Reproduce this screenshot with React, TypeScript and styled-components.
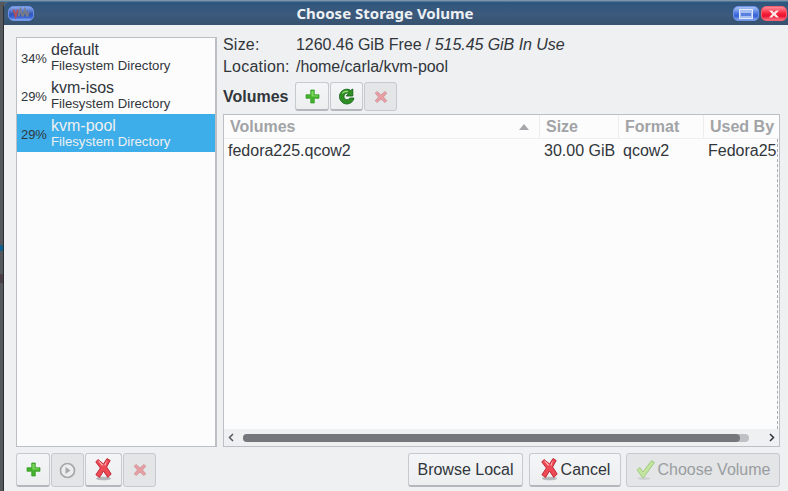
import styled, { createGlobalStyle } from "styled-components";

const Global = createGlobalStyle`
  html, body { margin: 0; padding: 0; }
  body { font-family: "Liberation Sans", Arial, sans-serif; color: #31363b; }
`;

const Screen = styled.div`
  position: relative;
  width: 788px;
  height: 491px;
  overflow: hidden;
  background: #55585d;
  padding: 2px 0 0 3px;
  box-sizing: border-box;
`;

const TopEdge = styled.div`
  position: absolute;
  top: 0;
  left: 0;
  right: 0;
  height: 2px;
  background: linear-gradient(#9b9ea3, #2f6f9c);
`;

const BackdropBit = styled.div<{ $top: number; $h: number; $c: string }>`
  position: absolute;
  left: 0;
  width: 3px;
  top: ${(p) => p.$top}px;
  height: ${(p) => p.$h}px;
  background: ${(p) => p.$c};
`;

const Win = styled.div`
  height: 489px;
  display: flex;
  flex-direction: column;
  background: #eff0f2;
  border-left: 1px solid #2b2e33;
  border-radius: 5px 0 0 0;
  overflow: hidden;
`;

const TitleBar = styled.div`
  position: relative;
  height: 23px;
  flex: none;
  display: flex;
  align-items: center;
  justify-content: space-between;
  padding: 0 1px 0 4px;
  background: linear-gradient(#2f567e, #3c5a7c 55%, #36516f);
`;

const TitleText = styled.div`
  position: absolute;
  left: 0;
  right: 22px;
  top: 2px;
  text-align: center;
  color: #eef1f4;
  font-family: "Noto Sans", "Open Sans", sans-serif;
  font-size: 15px;
  font-weight: 700;
  line-height: 19px;
`;

const Pill = styled.div<{ $c: "blue" | "red" }>`
  width: 26px;
  height: 15px;
  border-radius: 5px;
  display: flex;
  align-items: center;
  justify-content: center;
  box-sizing: border-box;
  border: 1px solid ${(p) => (p.$c === "blue" ? "#6f93e8" : "#f0606f")};
  background: ${(p) =>
    p.$c === "blue"
      ? "linear-gradient(#a9c3f5, #4a74e0 50%, #3560d4 70%, #88a8ee)"
      : "linear-gradient(#ff8a96, #f8223a 50%, #e81230 70%, #ff7080)"};
`;

const PillGroup = styled.div`
  display: flex;
  gap: 2px;
`;

const Body = styled.div`
  flex: 1;
  min-height: 0;
  display: flex;
  flex-direction: column;
  padding: 12px 8px 4px 12px;
`;

const Main = styled.div`
  height: 410px;
  display: flex;
  gap: 6px;
`;

const PoolList = styled.div`
  width: 201px;
  box-sizing: border-box;
  flex: none;
  background: #fcfcfc;
  border: 1px solid #bcc0c5;
  border-right-width: 2px;
`;

const PoolRow = styled.div<{ $sel?: boolean }>`
  height: 38px;
  display: flex;
  align-items: center;
  padding-left: 4px;
  gap: 5px;
  background: ${(p) => (p.$sel ? "#3daee9" : "transparent")};
  color: ${(p) => (p.$sel ? "#eff0f1" : "#31363b")};
`;

const Percent = styled.div`
  width: 25px;
  font-size: 13px;
  letter-spacing: -0.1px;
  color: #31363b;
  margin-top: 2px;
`;

const PoolName = styled.div`
  font-size: 16px;
  line-height: 17px;
`;

const PoolType = styled.div`
  font-size: 13.2px;
  line-height: 15px;
`;

const Detail = styled.div`
  flex: 1;
  min-width: 0;
  display: flex;
  flex-direction: column;
`;

const InfoGrid = styled.div`
  display: grid;
  grid-template-columns: 73px 1fr;
  grid-auto-rows: 22px;
  font-size: 16px;
  letter-spacing: -0.05px;
  align-items: center;
  margin-top: -3px;
`;

const InfoLabel = styled.div`
  letter-spacing: 0.2px;
`;

const VolHead = styled.div`
  display: flex;
  align-items: center;
  gap: 1px;
  margin-top: 4px;
  height: 29px;
`;

const VolLabel = styled.div`
  font-size: 16px;
  font-weight: 700;
  width: 71px;
  flex: none;
`;

const ToolBtn = styled.div<{ $w?: number; $h?: number; $off?: boolean }>`
  width: ${(p) => p.$w ?? 33}px;
  height: ${(p) => p.$h ?? 29}px;
  box-sizing: border-box;
  display: flex;
  align-items: center;
  justify-content: center;
  flex: none;
  border-radius: 3px;
  border: 1px solid #c6c9cd;
  border-bottom: ${(p) => (p.$off ? "1px" : "2px")} solid ${(p) => (p.$off ? "#c6c9cd" : "#b4b7bb")};
  background: ${(p) => (p.$off ? "#e3e5e7" : "linear-gradient(#f4f5f6, #eceef0)")};
`;

const Table = styled.div`
  margin-top: 3px;
  flex: 1;
  min-height: 0;
  display: flex;
  flex-direction: column;
  border: 1px solid #bcc0c5;
  background: #fcfcfc;
`;

const HeadRow = styled.div`
  height: 24px;
  flex: none;
  display: flex;
  border-bottom: 1px solid #eeeff0;
  box-sizing: border-box;
`;

const HeadCell = styled.div<{ $w: number }>`
  width: ${(p) => p.$w}px;
  flex: none;
  box-sizing: border-box;
  border-right: 1px solid #eceded;
  font-size: 16px;
  font-weight: 700;
  color: #a1a3a6;
  padding: 3px 0 0 6px;
  display: flex;
  justify-content: space-between;
  &:last-child { border-right: 0; flex: 1; min-width: 0; white-space: nowrap; overflow: hidden; }
`;

const SortMark = styled.span`
  width: 0;
  height: 0;
  margin: 6px 10px 0 0;
  border-left: 5px solid transparent;
  border-right: 5px solid transparent;
  border-bottom: 6px solid #a5a7aa;
`;

const Rows = styled.div`
  position: relative;
  flex: 1;
  min-height: 0;
`;

const DataRow = styled.div`
  display: flex;
  height: 24px;
  align-items: center;
  font-size: 16px;
`;

const DataCell = styled.div<{ $w: number }>`
  width: ${(p) => p.$w}px;
  flex: none;
  padding-left: 4px;
  box-sizing: border-box;
  white-space: nowrap;
  overflow: hidden;
  &:last-child { flex: 1; min-width: 0; width: auto; }
`;

const DashLine = styled.div`
  position: absolute;
  right: 1px;
  top: 0;
  bottom: 0;
  width: 0;
  border-right: 1px dashed #a9abae;
`;

const ScrollBar = styled.div`
  height: 17px;
  flex: none;
  display: flex;
  align-items: center;
  background: #eff0f2;
  padding: 0 3px;
  gap: 5px;
`;

const Track = styled.div`
  flex: 1;
  height: 8px;
  border-radius: 4px;
  background: #bdc1c5;
  margin: 0 14px 0 3px;
`;

const Thumb = styled.div`
  width: 497px;
  height: 8px;
  border-radius: 4px;
  background: #75777c;
`;

const Arrow = styled.span`
  width: 8px;
  display: flex;
  justify-content: center;
`;

const Footer = styled.div`
  display: flex;
  align-items: center;
  margin-top: 6px;
  height: 34px;
`;

const FootGroup = styled.div`
  display: flex;
  gap: 1px;
`;

const Spacer = styled.div`
  flex: 1;
`;

const FootActions = styled.div`
  display: flex;
  gap: 5px;
  & > :first-child { margin-right: 1px; }
`;

const ActionBtn = styled.div<{ $w: number; $off?: boolean }>`
  width: ${(p) => p.$w}px;
  height: 34px;
  box-sizing: border-box;
  display: flex;
  align-items: center;
  justify-content: center;
  gap: 2px;
  font-size: 16px;
  border-radius: 3px;
  border: 1px solid #c6c9cd;
  border-bottom: ${(p) => (p.$off ? "1px" : "2px")} solid ${(p) => (p.$off ? "#c6c9cd" : "#b4b7bb")};
  background: ${(p) => (p.$off ? "#e3e5e7" : "linear-gradient(#f4f5f6, #eceef0)")};
  color: ${(p) => (p.$off ? "#9a9da0" : "#31363b")};
`;

const AppIcon = () => (
  <svg width="26" height="15" viewBox="0 0 26 15">
    <defs>
      <linearGradient id="ap" x1="0" y1="0" x2="0" y2="1">
        <stop offset="0" stopColor="#8faeea" />
        <stop offset="0.55" stopColor="#2f55b8" />
        <stop offset="0.8" stopColor="#3f6ad8" />
        <stop offset="1" stopColor="#9ab6f2" />
      </linearGradient>
    </defs>
    <rect x="0.5" y="0.5" width="25" height="14" rx="5" fill="url(#ap)" stroke="#7096ea" />
    <path d="M5.5 3.500l2.200 7 2.200-7" stroke="#b0505c" strokeWidth="2" fill="none" />
    <path d="M10.500 10.500l2-7 2 7M15 10.500l2-7 2 7M19.500 10.500l1-5" stroke="#7a7c86" strokeWidth="1.800" fill="none" />
  </svg>
);

const Plus = () => (
  <svg width="15" height="15" viewBox="0 0 15 15">
    <path d="M5.700 1h3.600v4.700H14v3.600H9.300V14H5.700V9.300H1V5.700h4.700z" fill="#45b22c" stroke="#2f9a20" strokeWidth="0.700" strokeLinejoin="round" />
    <path d="M6.500 2h2v4.500H13v1H6.500z" fill="#7fd95f" />
  </svg>
);

const Refresh = () => (
  <svg width="17" height="17" viewBox="0 0 17 17">
    <path d="M9 1.200c1.500 0 2.700.5 3.600 1.300L14.800 1v7h-6.600l2.200-2.200C10 5.300 9.500 5.100 9 5.100 7.300 5.100 6 6.500 6 8.400s1.300 3.400 3 3.400c1.200 0 2.200-.7 2.700-1.700H16C15.300 13.300 12.500 16 9 16 5 16 1.500 12.700 1.500 8.500S5 1.200 9 1.200z" fill="#2f8f22" stroke="#15651a" strokeWidth="0.900" strokeLinejoin="round" />
    <path d="M4 5C5.500 3 8 2.300 10.500 3L9 4.200C7 4 5.500 4.500 4 6z" fill="#9fe080" />
  </svg>
);

const Cross = () => (
  <svg width="14" height="14" viewBox="0 0 16 16" opacity={0.45}>
    <path d="M3.400 1.600 8 5.600l4.600-4 2 2L10.800 8l3.800 4.400-2 2L8 10.400l-4.600 4-2-2L5.200 8 1.400 3.600z" fill="#ee4a52" stroke="#b0202c" strokeWidth="0.800" strokeLinejoin="round" />
  </svg>
);

const BigCross = () => (
  <svg width="19" height="25" viewBox="0 0 19 25">
    <ellipse cx="9.500" cy="21.500" rx="7.500" ry="1.800" fill="#b5b7ba" />
    <path d="M4 2.500 9.500 7 13 1.500l3.200 2L12.600 10l4.600 7-3.400 3.400L9.500 14l-4 6.500-3.600-2.800L6.400 11 1.800 5z" fill="#ee4a55" stroke="#b91f2e" strokeWidth="0.900" strokeLinejoin="round" />
    <path d="M4.200 4 8 8.600l1.500-.4L4.800 3.400zM13 3l-2.600 5 1 .8z" fill="#ffc2c2" />
  </svg>
);

const PlayCircle = () => (
  <svg width="17" height="17" viewBox="0 0 17 17">
    <circle cx="8.500" cy="8.500" r="7" fill="#eceded" stroke="#a6a8aa" strokeWidth="1.700" />
    <path d="M6.500 5l5 3.500-5 3.500z" fill="#a6a8aa" />
  </svg>
);

const Check = () => (
  <svg width="20" height="22" viewBox="0 0 20 22">
    <ellipse cx="8" cy="19.500" rx="6.500" ry="1.500" fill="#cfd1d3" />
    <path d="M1 11l3-2.400 3 4.400L15.500 1.600l3 1.800L7.600 18.500h-1z" fill="#c3e59f" stroke="#9cc77c" strokeWidth="0.900" strokeLinejoin="round" />
  </svg>
);

const pools = [
  { pct: "34%", name: "default" },
  { pct: "29%", name: "kvm-isos" },
  { pct: "29%", name: "kvm-pool", sel: true },
];

const cols = [316, 79, 85, 0];

export default function App() {
  return (
    <Screen>
      <Global />
      <TopEdge />
      <BackdropBit $top={245} $h={6} $c="#0d5f8c" />
      <BackdropBit $top={274} $h={9} $c="#4a3d44" />
      <Win>
        <TitleBar>
          <AppIcon />
          <TitleText>Choose Storage Volume</TitleText>
          <PillGroup>
            <Pill $c="blue">
              <svg width="14" height="10" viewBox="0 0 14 10">
                <rect x="0.5" y="0.5" width="13" height="9" fill="#a8bff2" stroke="#dfe8fb" />
                <rect x="2" y="4" width="10" height="3" fill="#5a7fe0" />
              </svg>
            </Pill>
            <Pill $c="red">
              <svg width="12" height="8" viewBox="0 0 12 8">
                <path d="M1 0.500h3L6 2.600 8 .5h3L7.800 4 11 7.500H8L6 5.400 4 7.500H1L4.200 4z" fill="#ffe6e6" />
              </svg>
            </Pill>
          </PillGroup>
        </TitleBar>
        <Body>
          <Main>
            <PoolList>
              {pools.map((p) => (
                <PoolRow key={p.name} $sel={p.sel}>
                  <Percent>{p.pct}</Percent>
                  <div>
                    <PoolName>{p.name}</PoolName>
                    <PoolType>Filesystem Directory</PoolType>
                  </div>
                </PoolRow>
              ))}
            </PoolList>
            <Detail>
              <InfoGrid>
                <InfoLabel>Size:</InfoLabel>
                <div>
                  1260.46 GiB Free / <i>515.45 GiB In Use</i>
                </div>
                <InfoLabel>Location:</InfoLabel>
                <div>/home/carla/kvm-pool</div>
              </InfoGrid>
              <VolHead>
                <VolLabel>Volumes</VolLabel>
                <ToolBtn $w={34}><Plus /></ToolBtn>
                <ToolBtn><Refresh /></ToolBtn>
                <ToolBtn $off><Cross /></ToolBtn>
              </VolHead>
              <Table>
                <HeadRow>
                  <HeadCell $w={cols[0]}>
                    Volumes
                    <SortMark />
                  </HeadCell>
                  <HeadCell $w={cols[1]}>Size</HeadCell>
                  <HeadCell $w={cols[2]}>Format</HeadCell>
                  <HeadCell $w={cols[3]}>Used By</HeadCell>
                </HeadRow>
                <Rows>
                  <DataRow>
                    <DataCell $w={cols[0]}>fedora225.qcow2</DataCell>
                    <DataCell $w={cols[1]}>30.00 GiB</DataCell>
                    <DataCell $w={cols[2]}>qcow2</DataCell>
                    <DataCell $w={cols[3]}>Fedora25</DataCell>
                  </DataRow>
                  <DashLine />
                </Rows>
                <ScrollBar>
                  <Arrow>
                    <svg width="6" height="9" viewBox="0 0 6 9"><path d="M5 1 1.500 4.500 5 8" fill="none" stroke="#55585c" strokeWidth="1.500" /></svg>
                  </Arrow>
                  <Track><Thumb /></Track>
                  <Arrow>
                    <svg width="6" height="9" viewBox="0 0 6 9"><path d="M1 1l3.500 3.500L1 8" fill="none" stroke="#31363b" strokeWidth="1.500" /></svg>
                  </Arrow>
                </ScrollBar>
              </Table>
            </Detail>
          </Main>
          <Footer>
            <FootGroup>
              <ToolBtn $w={34} $h={34}><Plus /></ToolBtn>
              <ToolBtn $h={34} $off><PlayCircle /></ToolBtn>
              <ToolBtn $h={34} $w={37}><BigCross /></ToolBtn>
              <ToolBtn $h={34} $off><Cross /></ToolBtn>
            </FootGroup>
            <Spacer />
            <FootActions>
              <ActionBtn $w={115}>Browse Local</ActionBtn>
              <ActionBtn $w={92}><BigCross />Cancel</ActionBtn>
              <ActionBtn $w={154} $off><Check />Choose Volume</ActionBtn>
            </FootActions>
          </Footer>
        </Body>
      </Win>
    </Screen>
  );
}
